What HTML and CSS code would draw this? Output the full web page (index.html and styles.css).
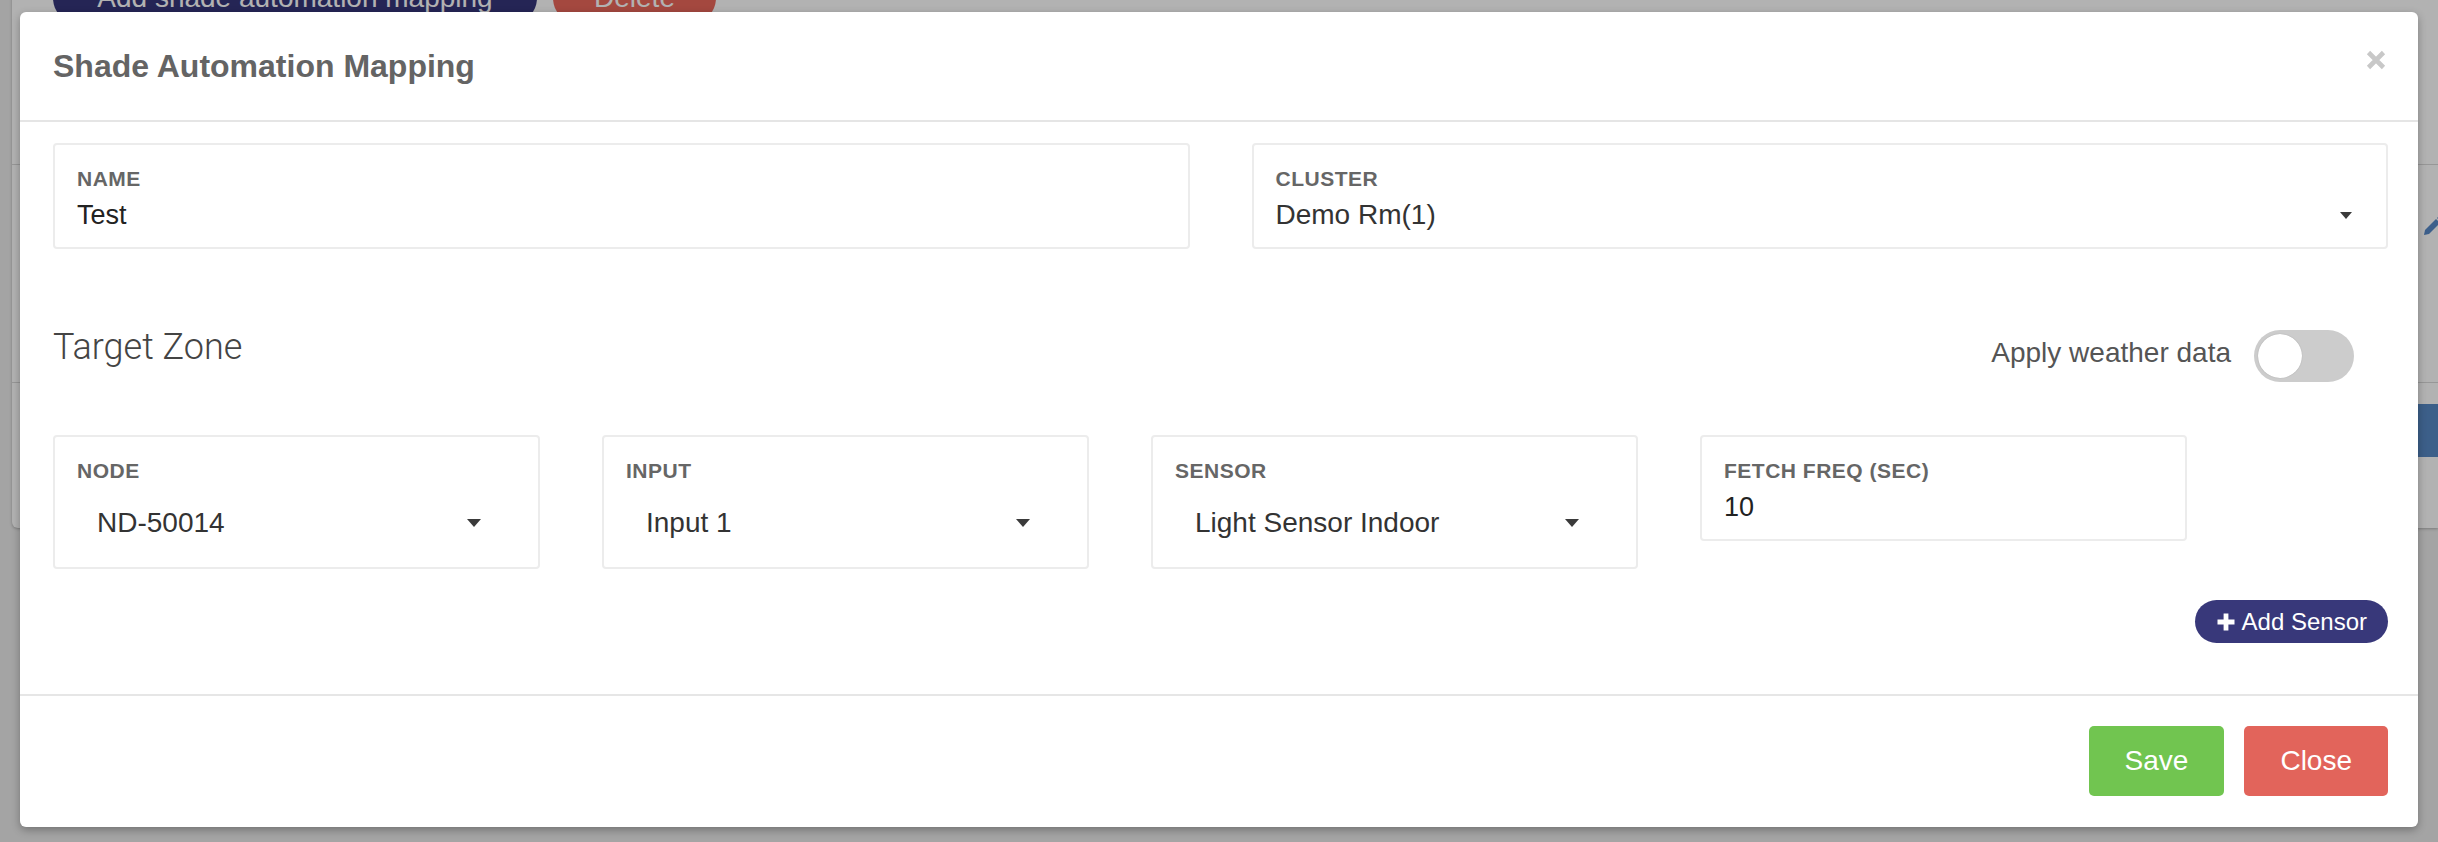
FILE: index.html
```html
<!DOCTYPE html>
<html>
<head>
<meta charset="utf-8">
<title>Shade Automation Mapping</title>
<link rel="stylesheet" href="styles.css">
</head>
<body>
<div class="page">
  <div class="panel">
    <div class="toolbar">
      <button class="btn-navy">Add shade automation mapping</button>
      <button class="btn-del">Delete</button>
    </div>
    <div class="table">
      <div class="trow">
        <span class="pencil"><svg width="22" height="22" viewBox="0 0 22 22"><path d="M3 15 L14 4 L18 8 L7 19 L2 20 Z" fill="#5788c8"/><path d="M15 3 L17 1 L21 5 L19 7 Z" fill="#5788c8"/></svg></span>
      </div>
    </div>
    <div class="bluebar"></div>
  </div>
</div>
<div class="backdrop"></div>
<div class="modal">
  <div class="modal-header">
    <h4 class="modal-title">Shade Automation Mapping</h4>
    <button class="close" aria-label="Close"><svg width="20" height="20" viewBox="0 0 20 20"><path d="M2.5 2.5 L17.5 17.5 M17.5 2.5 L2.5 17.5" stroke="#c8c8c8" stroke-width="4.6"/></svg></button>
  </div>
  <div class="modal-body">
    <div class="row2">
      <div class="field">
        <label class="lbl">NAME</label>
        <div class="value">Test</div>
      </div>
      <div class="field">
        <label class="lbl">CLUSTER</label>
        <div class="value sel">Demo Rm(1)<span class="caret small"></span></div>
      </div>
    </div>
    <div class="zone-row">
      <h4 class="zone">Target Zone</h4>
      <div class="weather">
        <span class="weather-label">Apply weather data</span>
        <span class="switch"><span class="knob"></span></span>
      </div>
    </div>
    <div class="row4">
      <div class="field col dd">
        <label class="lbl">NODE</label>
        <div class="select">ND-50014<span class="caret"></span></div>
      </div>
      <div class="field col dd">
        <label class="lbl">INPUT</label>
        <div class="select">Input 1<span class="caret"></span></div>
      </div>
      <div class="field col dd">
        <label class="lbl">SENSOR</label>
        <div class="select">Light Sensor Indoor<span class="caret"></span></div>
      </div>
      <div class="field col">
        <label class="lbl">FETCH FREQ (SEC)</label>
        <div class="value">10</div>
      </div>
    </div>
    <div class="add-row">
      <button class="btn-add"><svg width="18" height="18" viewBox="0 0 18 18"><path d="M6.6 0.5 h4.8 v6.1 h6.1 v4.8 h-6.1 v6.1 h-4.8 v-6.1 h-6.1 v-4.8 h6.1 z" fill="#fff"/></svg>Add Sensor</button>
    </div>
  </div>
  <div class="modal-footer">
    <button class="btn save">Save</button>
    <button class="btn close-btn">Close</button>
  </div>
</div>
</body>
</html>
```
FILE: styles.css
```css
* { box-sizing: border-box; }
html, body { margin: 0; padding: 0; }
body {
  width: 2438px;
  height: 842px;
  overflow: hidden;
  position: relative;
  background: #ebebeb;
  font-family: "Liberation Sans", Arial, sans-serif;
}
button { font-family: inherit; cursor: pointer; }

/* underlying page */
.page { padding-left: 12px; }
.panel {
  background: #fff;
  margin-top: -28px;
  height: 556px;
  border-bottom-left-radius: 6px;
  box-shadow: 0 1px 3px rgba(0,0,0,0.25);
  display: flex;
  flex-direction: column;
}
.toolbar { display: flex; gap: 16px; padding-left: 41px; }
.btn-navy, .btn-del {
  height: 52px;
  border: none;
  border-radius: 26px;
  color: #fff;
  font-size: 28px;
  line-height: 52px;
  padding: 0;
}
.btn-navy { width: 484px; background: #36367a; }
.btn-del { width: 163px; background: #eb675b; }
.table { margin-top: 140px; border-top: 1px solid #d8d8d8; }
.trow {
  height: 218px;
  border-bottom: 1px solid #d8d8d8;
  display: flex;
  justify-content: flex-end;
  align-items: flex-start;
  padding-top: 50px;
  margin-right: -6px;
}
.pencil { display: flex; }
.bluebar { margin-top: 21px; height: 53px; background: #5788c5; margin-left: 2300px; }

.backdrop {
  position: absolute;
  inset: 0;
  background: rgba(0,0,0,0.3);
}

/* modal */
.modal {
  position: absolute;
  top: 12px;
  left: 20px;
  width: 2398px;
  background: #fff;
  border-radius: 6px;
  box-shadow: 0 3px 9px rgba(0,0,0,0.3);
  display: flex;
  flex-direction: column;
}
.modal-header {
  display: flex;
  justify-content: space-between;
  align-items: flex-start;
  padding: 36px 32px 36px 33px;
  border-bottom: 2px solid #e5e5e5;
}
.modal-title {
  margin: 0;
  font-size: 32px;
  line-height: 36px;
  font-weight: bold;
  color: #646464;
}
.close {
  background: none;
  border: none;
  padding: 0;
  margin-top: 2px;
  width: 20px;
  height: 20px;
  display: flex;
}
.modal-body { padding: 21px 30px 51px 33px; }

.row2 {
  display: grid;
  grid-template-columns: 1fr 1fr;
  gap: 62px;
}
.field {
  border: 2px solid #ececec;
  border-radius: 4px;
  padding: 22px 22px 16px;
}
.field.dd { padding-bottom: 12px; }
.lbl {
  display: block;
  font-size: 21px;
  line-height: 24px;
  font-weight: bold;
  color: #666;
  letter-spacing: 0.5px;
  margin-bottom: 8px;
}
.value {
  font-size: 27px;
  line-height: 32px;
  color: #222;
}
.value.sel {
  display: flex;
  justify-content: space-between;
  align-items: center;
  padding-right: 12px;
  font-size: 28px;
  color: #333;
}
.caret {
  width: 0;
  height: 0;
  border-left: 7px solid transparent;
  border-right: 7px solid transparent;
  border-top: 8px solid #3a3a3a;
}
.caret.small {
  border-left-width: 6px;
  border-right-width: 6px;
  border-top-width: 7px;
}

.zone-row {
  display: flex;
  justify-content: space-between;
  align-items: flex-start;
  margin-top: 81px;
  height: 52px;
  padding-right: 34px;
}
.zone {
  margin: 0;
  font-family: Roboto, "Liberation Sans", sans-serif;
  font-weight: 300;
  font-size: 36px;
  line-height: 34px;
  color: #444;
}
.weather {
  display: flex;
  align-items: center;
  gap: 23px;
}
.weather-label {
  font-size: 28px;
  line-height: 32px;
  color: #555;
  margin-bottom: 6px;
}
.switch {
  width: 100px;
  height: 52px;
  border-radius: 26px;
  background: #cccccc;
  padding: 4px;
  display: flex;
  align-items: center;
}
.knob {
  width: 44px;
  height: 44px;
  border-radius: 50%;
  background: #fff;
  box-shadow: 0 0 1px rgba(0,0,0,0.3);
}

.row4 {
  display: flex;
  gap: 62px;
  margin-top: 53px;
  align-items: flex-start;
}
.col { width: 487px; }
.select {
  height: 64px;
  display: flex;
  align-items: center;
  justify-content: space-between;
  padding: 0 35px 0 20px;
  font-size: 28px;
  line-height: 32px;
  color: #333;
}

.add-row {
  display: flex;
  justify-content: flex-end;
  margin-top: 31px;
}
.btn-add {
  height: 43px;
  border: none;
  border-radius: 22px;
  background: #38387a;
  color: #fff;
  font-size: 24px;
  padding: 0 21px 0 22px;
  display: flex;
  align-items: center;
  gap: 7px;
}

.modal-footer {
  border-top: 2px solid #e6e6e6;
  padding: 30px 30px 31px;
  display: flex;
  justify-content: flex-end;
  gap: 20px;
}
.btn {
  height: 70px;
  padding: 0 36px;
  border: none;
  border-radius: 5px;
  color: #fff;
  font-size: 28px;
}
.save { background: #71c550; }
.close-btn { background: #e2645b; }
```
